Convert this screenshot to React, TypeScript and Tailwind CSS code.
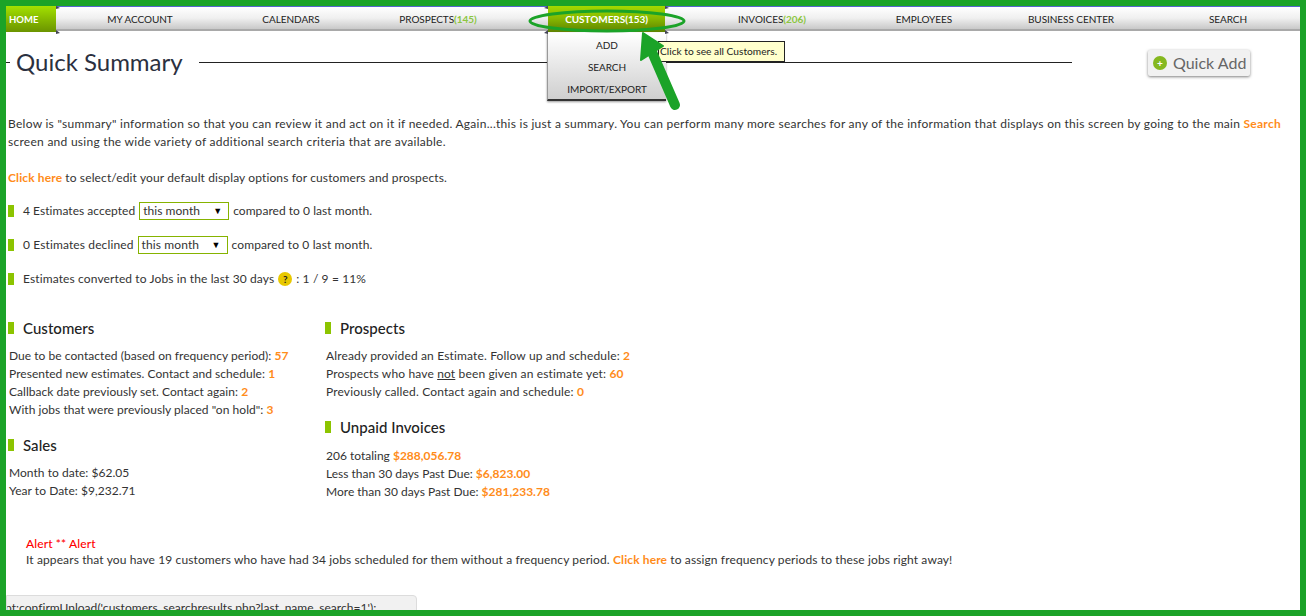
const FONT = "font-['Lato','Open_Sans',sans-serif]";

const Orange = ({ children }: { children: React.ReactNode }) => (
  <span className="font-bold text-[#ff8c1a]">{children}</span>
);

const Bullet = () => <span className="h-3 w-1.5 shrink-0 bg-[#8cc400]" />;

function NavItem({ label, count, className }: { label: string; count?: string; className: string }) {
  return (
    <div className={`flex items-center justify-center pt-[3px] text-[10px] tracking-[-0.05px] text-[#222] ${className}`}>
      {label}
      {count ? <span className="font-bold text-[#8cc63f]">{count}</span> : null}
    </div>
  );
}

function MonthSelect() {
  return (
    <span className="mx-[4px] flex h-[18px] w-[90px] items-center justify-between border border-[#86b300] bg-white pl-[3px] pr-[6px] text-[12px]">
      this month
      <span className="text-[9px] text-black">▼</span>
    </span>
  );
}

function SectionTitle({ children }: { children: React.ReactNode }) {
  return (
    <div className="flex items-center gap-[9px] text-[15px] font-medium leading-5 text-[#222]">
      <Bullet />
      {children}
    </div>
  );
}

export default function App() {
  return (
    <div className={`relative h-[616px] w-[1306px] overflow-hidden border-[6px] border-[#1ba328] bg-white text-[12px] tracking-[0.04px] text-[#333] ${FONT}`}>
      {/* nav bar */}
      <div className="relative flex h-[25px] border-t border-[#5566cc] border-b-2 border-b-[#a9a9a9] bg-gradient-to-b from-white via-[#f0f0f0] to-[#c9c9c9] pr-4">
        <div className="-mt-[2px] flex h-[27px] w-[50px] items-center bg-gradient-to-b from-[#a5e400] to-[#6b9400] pl-[3px] pt-[3px] text-[9.5px] font-bold text-white">HOME</div>
        <NavItem label="MY ACCOUNT" className="w-[168px]" />
        <NavItem label="CALENDARS" className="w-[134px]" />
        <NavItem label="PROSPECTS" count="(145)" className="mr-[30px] w-[160px]" />
        <div className="-mt-[2px] flex h-[27px] w-[117px] items-center justify-center bg-gradient-to-b from-[#a5dc00] via-[#86b800] to-[#5f8200] pt-[2px] text-[10px] font-bold tracking-[-0.05px] text-white">CUSTOMERS(153)</div>
        <NavItem label="INVOICES" count="(206)" className="w-[214px]" />
        <NavItem label="EMPLOYEES" className="w-[90px]" />
        <NavItem label="BUSINESS CENTER" className="w-[204px]" />
        <NavItem label="SEARCH" className="w-[110px]" />
      </div>

      {/* heading */}
      <div className="flex h-[84px] items-start pt-[14px]">
        <div className="flex flex-1 items-center">
          <span className="h-px w-1 bg-[#222]" />
          <h1 className="ml-[6px] text-[24px] font-normal leading-[34px] tracking-normal text-[#2b3040]">Quick Summary</h1>
          <span className="ml-4 h-px w-[873px] bg-[#222]" />
        </div>
        <div className="mr-[50px] mt-[5px] flex h-[26px] w-[102px] items-center gap-[6px] rounded-[2px] bg-[#f1f1f1] pl-[5px] text-[16px] tracking-normal text-[#666] shadow-[0_1px_3px_rgba(0,0,0,0.5)]">
          <span className="flex h-[14px] w-[14px] items-center justify-center rounded-full bg-[#85b81f] text-[10px] font-bold leading-none text-white">+</span>
          Quick Add
        </div>
      </div>

      {/* intro */}
      <p className="ml-[2px] w-[1285px] leading-[18px] tracking-[0.27px]">
        Below is "summary" information so that you can review it and act on it if needed. Again...this is just a summary. You can perform many more searches for any of the information that displays on this screen by going to the main <Orange>Search</Orange> screen and using the wide variety of additional search criteria that are available.
      </p>
      <p className="ml-[2px] mt-[18px] leading-[18px] tracking-[0.12px]">
        <Orange>Click here</Orange> to select/edit your default display options for customers and prospects.
      </p>

      {/* estimates */}
      <div className="ml-[2px] mt-[14px] flex h-[20px] items-center">
        <Bullet />
        <span className="ml-[9px]">4 Estimates accepted</span>
        <MonthSelect />
        compared to 0 last month.
      </div>
      <div className="ml-[2px] mt-[14px] flex h-[20px] items-center tracking-[0.12px]">
        <Bullet />
        <span className="ml-[9px]">0 Estimates declined</span>
        <MonthSelect />
        compared to 0 last month.
      </div>
      <div className="ml-[2px] mt-[14px] flex h-[20px] items-center tracking-[0.12px]">
        <Bullet />
        <span className="ml-[9px]">Estimates converted to Jobs in the last 30 days</span>
        <span className="mx-[4px] flex h-[14px] w-[14px] items-center justify-center rounded-full bg-[#e8c800] text-[10px] font-bold text-[#222]">?</span>
        : 1 / 9 = 11%
      </div>

      {/* two columns */}
      <div className="ml-[2px] mt-[29px] flex">
        <div className="w-[317px]">
          <SectionTitle>Customers</SectionTitle>
          <div className="ml-px mt-[9px] leading-[18px]">
            <div>Due to be contacted (based on frequency period): <Orange>57</Orange></div>
            <div>Presented new estimates. Contact and schedule: <Orange>1</Orange></div>
            <div>Callback date previously set. Contact again: <Orange>2</Orange></div>
            <div>With jobs that were previously placed "on hold": <Orange>3</Orange></div>
          </div>
          <div className="mt-[16px]">
            <SectionTitle>Sales</SectionTitle>
          </div>
          <div className="ml-px mt-[9px] leading-[18px]">
            <div>Month to date: $62.05</div>
            <div>Year to Date: $9,232.71</div>
          </div>
        </div>
        <div>
          <SectionTitle>Prospects</SectionTitle>
          <div className="ml-px mt-[9px] leading-[18px] tracking-[0.15px]">
            <div>Already provided an Estimate. Follow up and schedule: <Orange>2</Orange></div>
            <div>Prospects who have <u>not</u> been given an estimate yet: <Orange>60</Orange></div>
            <div>Previously called. Contact again and schedule: <Orange>0</Orange></div>
          </div>
          <div className="mt-[16px]">
            <SectionTitle>Unpaid Invoices</SectionTitle>
          </div>
          <div className="ml-px mt-[10px] leading-[18px] tracking-normal">
            <div>206 totaling <Orange>$288,056.78</Orange></div>
            <div>Less than 30 days Past Due: <Orange>$6,823.00</Orange></div>
            <div>More than 30 days Past Due: <Orange>$281,233.78</Orange></div>
          </div>
        </div>
      </div>

      {/* alert */}
      <div className="ml-5 mt-[35px] leading-4 tracking-[0.115px]">
        <div className="font-medium text-[#ff0000]">Alert ** Alert</div>
        <div>It appears that you have 19 customers who have had 34 jobs scheduled for them without a frequency period. <Orange>Click here</Orange> to assign frequency periods to these jobs right away!</div>
      </div>

      {/* browser status bubble */}
      <div className="mt-[27px] h-7 w-[411px] overflow-hidden whitespace-nowrap rounded-tr-[4px] border border-[#dcdcdc] bg-[#f1f1f1] pt-[3px] text-[12px] text-[#333]">
        <span className="-ml-[2px]">pt:confirmUnload('customers_searchresults.php?last_name_search=1');</span>
      </div>

      {/* customers dropdown */}
      <div className="absolute left-[541px] top-[27px] flex h-[68px] w-[119px] flex-col items-center gap-[6px] border-b-2 border-l border-b-[#333] border-l-[#999] bg-gradient-to-b from-white to-[#cfcfcf] pt-[4px] text-[10px] leading-[16px] tracking-[-0.05px] text-[#222] shadow-[0_1px_2px_rgba(0,0,0,0.4)]">
        <span>ADD</span>
        <span>SEARCH</span>
        <span>IMPORT/EXPORT</span>
      </div>

      {/* tooltip */}
      <div className="absolute left-[652px] top-[35px] flex h-[21px] w-[127px] items-center whitespace-nowrap border border-[#222] bg-[#ffffcc] pl-[1px] pt-px text-[10.2px] tracking-normal text-[#222]">
        Click to see all Customers.
      </div>

      {/* annotation: tab notches, ellipse and arrow */}
      <svg className="absolute left-[-6px] top-[-6px]" width="1306" height="616" fill="none">
        <path d="M56 6 L60 8 L56 9 Z M56 30 L60 33 L56 34 Z" fill="#445" />
        <path d="M548 6 L544 8 L548 9 Z M548 30 L544 33 L548 34 Z M665 6 L669 8 L665 9 Z M665 30 L669 33 L665 34 Z" fill="#445" />
        <ellipse cx="607" cy="21" rx="77" ry="10" stroke="#1ba328" strokeWidth="3" />
        <path d="M675 105 L652 52" stroke="#1ba328" strokeWidth="10" strokeLinecap="round" />
        <path d="M643 33 L663 46 L641 60 Z" fill="#1ba328" stroke="#1ba328" strokeWidth="2" strokeLinejoin="round" />
      </svg>
    </div>
  );
}
